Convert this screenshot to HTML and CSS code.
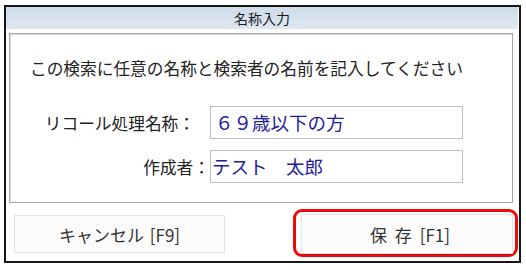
FILE: index.html
```html
<!DOCTYPE html>
<html lang="ja">
<head>
<meta charset="utf-8">
<title>名称入力</title>
<link rel="stylesheet" href="styles.css">
</head>
<body>
<div class="window">
  <div class="titlebar">名称入力</div>
  <div class="panel">
    <div class="instruction">この検索に任意の名称と検索者の名前を記入してください</div>
    <div class="row">
      <div class="label label-wide">リコール処理名称：</div>
      <div class="field field-wide">６９歳以下の方</div>
    </div>
    <div class="row row-second">
      <div class="label">作成者：</div>
      <div class="field">テスト　太郎</div>
    </div>
  </div>
  <div class="buttons">
    <div class="btn btn-cancel">キャンセル [F9]</div>
    <div class="highlight">
      <div class="btn btn-save">保 存 [F1]</div>
    </div>
  </div>
</div>
</body>
</html>
```

FILE: styles.css
```css
html, body {
  margin: 0;
  padding: 0;
  background: #ffffff;
}
body {
  font-family: "Noto Sans CJK JP", "Noto Sans", sans-serif;
  color: #222;
}
.window {
  box-sizing: border-box;
  margin: 5px 0 0 4px;
  width: 517px;
  height: 258px;
  border: 2px solid #161616;
  background: #ffffff;
  display: flex;
  flex-direction: column;
}
.titlebar {
  height: 22px;
  margin-right: 1px;
  background: linear-gradient(#cfdcea, #dfe8f2);
  font-size: 14px;
  line-height: 22px;
  text-align: center;
  color: #1a1a1a;
}
.panel {
  box-sizing: border-box;
  margin: 4px 6px 0 3px;
  height: 170px;
  border: 1px solid #a6a6a6;
  box-shadow: inset 1px 1px 0 #dcdcdc;
  padding: 22px 0 0 20px;
  display: flex;
  flex-direction: column;
}
.instruction {
  font-size: 16.7px;
  line-height: 24px;
  height: 24px;
  color: #222;
  white-space: nowrap;
  margin-bottom: 26px;
}
.row {
  display: flex;
  align-items: center;
  height: 33px;
}
.row-second {
  margin-top: 11px;
}
.label {
  box-sizing: border-box;
  width: 180px;
  text-align: right;
  font-size: 16.7px;
  color: #222;
  white-space: nowrap;
}
.label-wide {
  padding-right: 15px;
}
.field {
  box-sizing: border-box;
  width: 253px;
  height: 33px;
  border: 1px solid #bcbcbc;
  background: #fff;
  font-size: 18.5px;
  line-height: 31px;
  color: #20209c;
  padding-left: 1px;
  white-space: nowrap;
}
.field-wide {
  padding-left: 4px;
}
.buttons {
  display: flex;
  align-items: center;
  margin-top: 6px;
  height: 48px;
}
.btn {
  box-sizing: border-box;
  display: flex;
  align-items: center;
  justify-content: center;
  background: #fbfbfb;
  border: 1px solid #e4e4e4;
  color: #333;
  white-space: nowrap;
}
.btn-cancel {
  margin-left: 8px;
  margin-top: 2px;
  width: 211px;
  height: 38px;
  font-size: 17px;
  word-spacing: 2px;
}
.highlight {
  box-sizing: border-box;
  margin-left: auto;
  margin-right: 1px;
  width: 225px;
  height: 48px;
  border: 3px solid #ee0a0a;
  border-radius: 9px;
  padding: 2px 2px 0 5px;
}
.btn-save {
  width: 212px;
  height: 40px;
  font-size: 17px;
  word-spacing: 4px;
  padding-left: 6px;
  box-shadow: 0 1px 1px rgba(0,0,0,0.08);
}
```
